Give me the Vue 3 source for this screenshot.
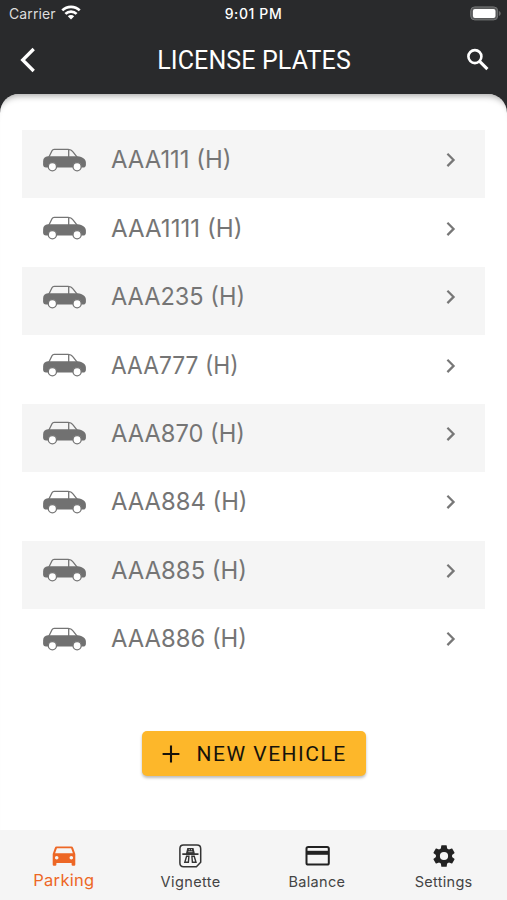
<script setup>
const plates = [
  { name: 'AAA111 (H)', width: 120.5 },
  { name: 'AAA1111 (H)', width: 131.5 },
  { name: 'AAA235 (H)', width: 134 },
  { name: 'AAA777 (H)', width: 127.5 },
  { name: 'AAA870 (H)', width: 134 },
  { name: 'AAA884 (H)', width: 136.5 },
  { name: 'AAA885 (H)', width: 136 },
  { name: 'AAA886 (H)', width: 136 },
]
</script>

<template>
  <div class="screen">
    <header class="top">
      <div class="status">
        <div class="carrier">
          <span>Carrier</span>
          <svg width="20" height="15" viewBox="0 0 20 15">
            <g fill="none" stroke="#fff" stroke-width="2.7">
              <path d="M1.3 5.4a12.5 12.5 0 0 1 17.4 0" />
              <path d="M4.4 8.9a8 8 0 0 1 11.2 0" />
            </g>
            <path d="M6.8 11.2a4.6 4.6 0 0 1 6.4 0L10 14.5Z" fill="#fff" />
          </svg>
        </div>
        <span class="time">9:01 PM</span>
        <div class="battery">
          <svg width="32" height="15" viewBox="0 0 32 15">
            <rect x=".7" y=".9" width="27" height="13" rx="4" fill="#58595a" stroke="#747576" />
            <rect x="2.9" y="2.9" width="22.6" height="9" rx="2" fill="#fff" />
            <path d="M29.2 5v5q1.4-.7 1.4-2.5T29.2 5Z" fill="#777" />
          </svg>
        </div>
      </div>
      <div class="bar">
        <svg class="back" width="18" height="26" viewBox="0 0 18 26">
          <path d="M14.7 2 3.7 13l11 11" fill="none" stroke="#fff" stroke-width="3.3" />
        </svg>
        <h1>LICENSE PLATES</h1>
        <svg class="search" width="24" height="24" viewBox="0 0 24 24">
          <circle cx="8.9" cy="8.6" r="6.5" fill="none" stroke="#fff" stroke-width="2.6" />
          <path d="m13.4 13.1 8 8" fill="none" stroke="#fff" stroke-width="3.1" />
        </svg>
      </div>
    </header>

    <main class="sheet">
      <ul class="list">
        <li v-for="plate in plates" :key="plate.name">
          <svg class="car" width="45" height="25" viewBox="0 0 45 25">
            <path d="M6.8 9.2 10 2.7Q10.7 1.3 12.2 1.3h14c2.2 0 3.500.7 4.600 2.300l4.300 5.600M26.700 1.400v7.800" fill="none" stroke="#757575" stroke-width="1.3" />
            <path d="M6 8.3h29.500c5.500.6 8.300 3 8.400 6.500v1.900c0 1.900-1 2.800-2.800 2.800H4c-1.900 0-2.900-1-2.900-2.900v-3.200C1.100 10.300 2.900 8.500 6 8.300Z" fill="#717171" />
            <g class="wheels" stroke="#757575" stroke-width="1.3">
              <circle cx="10.4" cy="18.7" r="4.1" />
              <circle cx="35.1" cy="18.7" r="4.1" />
            </g>
          </svg>
          <svg class="plate" width="180" height="36">
            <text x="0" y="26.4" :textLength="plate.width" lengthAdjust="spacingAndGlyphs">{{ plate.name }}</text>
          </svg>
          <svg class="chevron" width="12" height="16" viewBox="0 0 12 16">
            <path d="m2.400 1.700 6.200 6.200-6.200 6.200" fill="none" stroke="#777" stroke-width="2.2" />
          </svg>
        </li>
      </ul>
      <button class="new">
        <svg width="18" height="18" viewBox="0 0 18 18">
          <path d="M9 .6v16.800M.6 9h16.800" stroke="#17130a" stroke-width="2.1" />
        </svg>
        <span>NEW VEHICLE</span>
      </button>
    </main>

    <nav class="tabs">
      <a class="tab active">
        <svg width="30" height="26" viewBox="0 0 30 26">
          <path fill="#ed6725" fill-rule="evenodd" d="M7.700 3.500h14.600q1.400 0 1.900 1.400L26.300 11v10.500q0 1.200-1.100 1.200h-1.400q-1.200 0-1.200-1.200V20H7.400v1.500q0 1.200-1.200 1.200H4.800q-1.100 0-1.100-1.200V11l2.100-6.100Q6.300 3.500 7.700 3.500ZM7.900 5.300l-1.800 5h17.800l-1.800-5ZM7.700 13a1.800 1.800 0 1 0 0 3.600 1.800 1.800 0 0 0 0-3.600Zm14.600 0a1.800 1.800 0 1 0 0 3.600 1.800 1.800 0 0 0 0-3.600Z" />
        </svg>
        <span>Parking</span>
      </a>
      <a class="tab">
        <svg width="26" height="26" viewBox="0 0 26 26">
          <path d="M6.500 2h13.500q3.700 0 3.700 3.700v13.500l-4.300 4.500H6.500q-3.600 0-3.600-3.700V5.700Q2.900 2 6.500 2Z" fill="none" stroke="#333" stroke-width="1.5" />
          <path d="M10.300 5h6.200l1.300 5.300h3.700v1.700H5.300v-1.700H9Z" fill="#333" />
          <path d="M12.300 6v1.200m2.200 0V6M11.300 8.700h4.200" stroke="#ddd" stroke-width=".8" />
          <path d="M9.600 13.300h2.300l-.5 6H7.800Zm5.300 0h2.300l1.800 6h-3.600Z" fill="none" stroke="#333" stroke-width="1.4" />
        </svg>
        <span>Vignette</span>
      </a>
      <a class="tab">
        <svg width="26" height="26" viewBox="0 0 26 26">
          <rect x="2.500" y="3.900" width="22.300" height="17.700" rx="1.700" fill="none" stroke="#222" stroke-width="2" />
          <path d="M2.500 7.800h22v4h-22Z" fill="#222" />
        </svg>
        <span>Balance</span>
      </a>
      <a class="tab">
        <svg width="28" height="28" viewBox="0 0 24 24">
          <path fill="#222" d="M19.430 12.980c.040-.320.070-.640.070-.980s-.030-.660-.070-.980l2.110-1.650c.190-.150.240-.420.120-.640l-2-3.460c-.120-.220-.390-.300-.610-.220l-2.490 1c-.520-.400-1.080-.730-1.690-.980l-.380-2.650A.488.488 0 0 0 14 2h-4c-.250 0-.460.180-.490.420l-.380 2.650c-.610.250-1.170.590-1.690.980l-2.490-1c-.230-.090-.490 0-.610.220l-2 3.460c-.130.220-.070.490.120.640l2.110 1.650c-.040.320-.070.650-.070.980s.030.660.070.980l-2.110 1.650c-.190.150-.240.420-.120.640l2 3.460c.120.220.390.300.610.220l2.490-1c.520.400 1.080.730 1.690.980l.380 2.650c.030.240.240.420.490.420h4c.250 0 .460-.180.490-.420l.380-2.650c.610-.250 1.170-.590 1.690-.980l2.490 1c.230.090.490 0 .610-.220l2-3.460c.120-.220.070-.490-.120-.640l-2.110-1.650ZM12 15.800a3.800 3.800 0 1 1 0-7.600 3.800 3.800 0 0 1 0 7.600Z" />
        </svg>
        <span>Settings</span>
      </a>
    </nav>
  </div>
</template>

<style>
body { margin: 0; }
</style>

<style scoped>
.screen {
  width: 507px;
  height: 900px;
  display: flex;
  flex-direction: column;
  overflow: hidden;
  background: #292a2c;
  font-family: Inter, Roboto, sans-serif;
}
.top { height: 93.5px; flex: none; color: #fff; }
.status {
  height: 27px;
  display: grid;
  grid-template-columns: 1fr auto 1fr;
  align-items: center;
  padding: 0 5px 0 9px;
  box-sizing: border-box;
}
.carrier { display: flex; align-items: center; gap: 6px; font-size: 14px; letter-spacing: .1px; color: #ddd; }
.carrier svg { margin: -2px 0 0 -1px; }
.time { margin-left: -4px; font-size: 14px; font-weight: 500; letter-spacing: .6px; }
.battery { display: flex; justify-content: flex-end; }
.bar {
  height: 66px;
  display: grid;
  grid-template-columns: 40px 1fr 40px;
  align-items: center;
  padding: 0 17.5px 0 18.500px;
}
.back { margin-top: -1px; }
.search { justify-self: end; }
h1 { margin: 2px 0 0; font-family: Roboto, sans-serif; font-weight: 400; font-size: 25px; line-height: 30px; letter-spacing: .12px; text-align: center; white-space: nowrap; }
.sheet {
  flex: 1;
  display: flex;
  flex-direction: column;
  align-items: center;
  border-radius: 19px 19px 0 0;
  background: #fff;
  box-shadow: inset 0 8px 6px -6px #aaa;
}
.list { list-style: none; margin: 36.5px 0 0; padding: 0; width: 463px; }
li {
  height: 68.45px;
  padding: 0 28px 8px 20px;
  box-sizing: border-box;
  display: flex;
  align-items: center;
}
li:nth-child(odd) { background: #f5f5f5; }
.wheels { fill: #fff; }
.plate { margin-left: 24px; }
.plate text { font-size: 24px; fill: #757575; }
.chevron { margin-left: auto; }
.new {
  margin-top: 53.5px;
  width: 224px;
  height: 45px;
  border: 0;
  border-radius: 5px;
  background: #fdb72a;
  color: #17130a;
  box-shadow: 0 2px 3px #0004;
  display: flex;
  align-items: center;
  justify-content: flex-start;
  gap: 17px;
  padding: 0 0 0 20px;
  font-family: Roboto, sans-serif;
  font-size: 21px;
  letter-spacing: 1.5px;
  white-space: nowrap;
}
.tabs {
  height: 70px;
  flex: none;
  display: grid;
  grid-template-columns: repeat(4, 1fr);
  background: #f5f5f5;
}
.tab {
  display: flex;
  flex-direction: column;
  align-items: center;
  padding-top: 13px;
  color: #444;
  font-size: 14.5px;
  letter-spacing: .3px;
}
.tab svg { height: 26px; }
.tab span { line-height: 18px; margin-top: 4px; }
.tab:nth-child(2) span { letter-spacing: .4px; padding-left: 1px; }
.active { color: #ed6725; font-size: 16.5px; padding-left: 1px; }
.active span { margin-top: 2px; }
</style>
